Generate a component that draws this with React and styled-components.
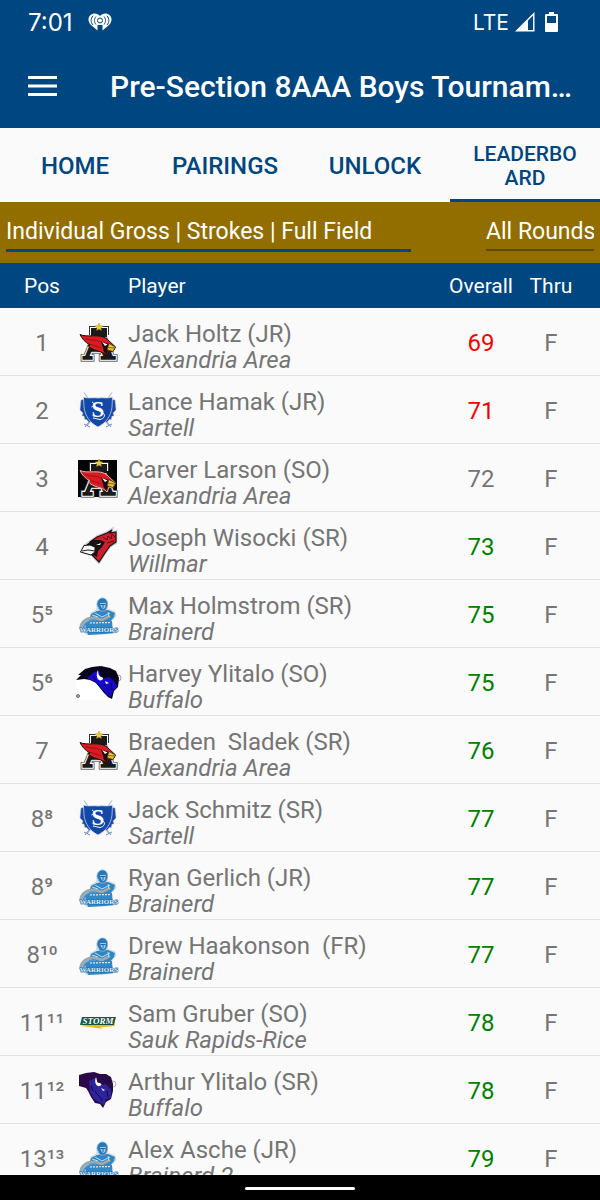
import React from 'react'
import styled, { createGlobalStyle } from 'styled-components'

const players = [
  { pos: '1', logo: 'alexandria', name: 'Jack Holtz (JR)', school: 'Alexandria Area', score: 69 },
  { pos: '2', logo: 'sartell', name: 'Lance Hamak (JR)', school: 'Sartell', score: 71 },
  { pos: '3', logo: 'alexandriaDark', name: 'Carver Larson (SO)', school: 'Alexandria Area', score: 72 },
  { pos: '4', logo: 'willmar', name: 'Joseph Wisocki (SR)', school: 'Willmar', score: 73 },
  { pos: '5⁵', logo: 'brainerd', name: 'Max Holmstrom (SR)', school: 'Brainerd', score: 75 },
  { pos: '5⁶', logo: 'buffalo', name: 'Harvey Ylitalo (SO)', school: 'Buffalo', score: 75 },
  { pos: '7', logo: 'alexandria', name: 'Braeden  Sladek (SR)', school: 'Alexandria Area', score: 76 },
  { pos: '8⁸', logo: 'sartell', name: 'Jack Schmitz (SR)', school: 'Sartell', score: 77 },
  { pos: '8⁹', logo: 'brainerd', name: 'Ryan Gerlich (JR)', school: 'Brainerd', score: 77 },
  { pos: '8¹⁰', logo: 'brainerd', name: 'Drew Haakonson  (FR)', school: 'Brainerd', score: 77 },
  { pos: '11¹¹', logo: 'storm', name: 'Sam Gruber (SO)', school: 'Sauk Rapids-Rice', score: 78 },
  { pos: '11¹²', logo: 'buffaloPurple', name: 'Arthur Ylitalo (SR)', school: 'Buffalo', score: 78 },
  { pos: '13¹³', logo: 'brainerd', name: 'Alex Asche (JR)', school: 'Brainerd 2', score: 79 },
]

const PAR = 72

function scoreColor(score) {
  if (score < PAR) return '#f80000'
  if (score > PAR) return '#008000'
  return '#757575'
}

function Cardinal({ dark }) {
  return (
    <>
      {dark && <rect width="39" height="37" y="1" fill="#050505" />}
      <BlockLetter x="21" y="36" stroke="#333" strokeWidth="5">A</BlockLetter>
      <rect x="11" y="3" width="20" height="9" fill="#333" />
      <BlockLetter x="21" y="36" stroke="#fff" strokeWidth="3.600">A</BlockLetter>
      <rect x="12" y="4" width="18" height="8" fill="#fff" />
      <BlockLetter x="21" y="36" stroke="#1a1a1a" strokeWidth="1.500">A</BlockLetter>
      <rect x="13" y="5" width="16" height="9" fill="#1a1a1a" />
      <path d="M2 11.500C9 15 22 10 29 16L37.500 24L35 28.500L31 28L29 33C24 27 15 29 10 22.500L12 22C7 19 4 16 2 11.500Z" fill="#d91c22" stroke={dark ? '#d8b8b0' : '#111'} strokeWidth="1" />
      <path d="M7 15.500C13 18 18 16 23 19M12 21C16 23 19 23 23 25" fill="none" stroke="#8c0d14" strokeWidth="0.800" />
      <path d="M23 18.500L31 21L30 26L29 32C27 30 25 28 25 25Z" fill="#1a0708" />
      <path d="M24 19L29.500 21.500L27 23Z" fill="#fff" />
      <path d="M31 20.500L37.500 24L35 28.500L29 26.500Z" fill="#f0c62b" stroke="#332a10" strokeWidth="0.700" />
      <path d="M30 24.500L36.500 25" stroke="#332a10" strokeWidth="0.600" />
      <path d="M21 0L22.200 2.600L25 3L23 5L23.500 7.500L21 6.200L18.500 7.500L19 5L17 3L19.800 2.600Z" fill="#f2cf2e" stroke="#8a7a1c" strokeWidth="0.400" />
    </>
  )
}

function Sartell() {
  return (
    <>
      <path d="M6 1.500L31 35M34 1.500L9 35" stroke="#9aa9d4" strokeWidth="1" />
      <path d="M6 33L12 36M7 36L11 31M28 36L34 33M29 31L33 36" stroke="#6f85c4" strokeWidth="1" />
      <path d="M3 9L8 8L8 18L14 31L11 31L8 28L7 29L6 25L4 25L5 22L2 19ZM37 9L32 8L32 18L26 31L29 31L32 28L33 29L34 25L36 25L35 22L38 19Z" fill="#1c469c" stroke="#a9b9de" strokeWidth="0.500" />
      <path d="M5.500 6C11 8 15 6 20 7C25 6 29 8 34.500 6L34 16C33 25 28 32 20 36C12 32 7 25 6 16Z" fill="#1249a8" stroke="#dbe3f5" strokeWidth="0.700" />
      <ShieldLetter x="20" y="26">S</ShieldLetter>
      <path d="M14 11C17 12 16 15 13.500 16M25 22C28 24 26 28 22 28.500L15 27" fill="none" stroke="#fff" strokeWidth="1" />
    </>
  )
}

function Willmar() {
  return (
    <>
      <path d="M3 25L6 18.500L12 14L19 9L29 5L35 1L34 5L38.500 4L38.500 16L32 20L27 27L21 36.500L14 28.500Z" fill="#c9cdd0" stroke="#c9cdd0" strokeWidth="1.500" />
      <path d="M12 15L19 10L29 6L34 3L32 6L38 5L38 15L32 19L27 26L21 35L14 28Z" fill="#cf1d2b" stroke="#151515" strokeWidth="1.200" />
      <path d="M8 18L15 13L22 13L27 15L24 20L20 24L19 30L13 27Z" fill="#141414" />
      <path d="M2.500 25L6 18.500L12 18L17 20L17 25L13 28Z" fill="#f4f4f4" stroke="#161616" strokeWidth="1" />
      <path d="M4 24L10 23L17 24" fill="none" stroke="#222" strokeWidth="1" />
      <path d="M18 18L23 16L22 18Z" fill="#fff" />
      <path d="M25 10L29 13L30 9L33 12L34 7L37 10M29 16L36 14" fill="none" stroke="#5c0b12" strokeWidth="1" />
    </>
  )
}

function Warrior() {
  return (
    <>
      <path d="M12 18L18 15L19 6L24 2.500L29.500 6L30 14L37 16L38.500 21L33 27L35 39L9 40L3 36L2 30L7 24L13 21Z" fill="#d2dbe1" />
      <path d="M13 19L19 16L30 15L37 18L36 22L31 28L10 28Z" fill="#2e86c6" />
      <path d="M19 10C19 5 22 3 24.500 3C28 3 30 6 29.500 11L27 16L22 16Z" fill="#2479bb" stroke="#8fb4cd" strokeWidth="0.800" />
      <path d="M22 8L28 8L27 13L25 14L23 12Z" fill="#a7cbe2" />
      <path d="M22.500 9.500L27.500 9.500M25 9L25 13" stroke="#1767a3" strokeWidth="1" />
      <path d="M4 37C0 29 8 22 17 23L24 25L32 21" fill="none" stroke="#9ba9b1" strokeWidth="3" />
      <path d="M6 36C4 29 10 25 18 25.500" fill="none" stroke="#4b9bd1" strokeWidth="2" />
      <path d="M17 18L24 22L32 18M14 20L20 22M30 17L31 22" fill="none" stroke="#c7dce9" strokeWidth="1" />
      <path d="M7 29L13 26L34 26L35 38L27 39L10 40Z" fill="#3389c6" />
      <path d="M12 28L32 27.500" stroke="#e0edf5" strokeWidth="1.200" strokeDasharray="2 1" />
      <TeamWord x="21" y="37" fontSize="7" $narrow $fill="#e2eff8" $stroke="#1c6daa">WARRIORS</TeamWord>
    </>
  )
}

function Bison({ purple }) {
  if (purple) {
    return (
      <>
        <circle cx="35" cy="13" r="3" fill="none" stroke="#b6a9bd" strokeWidth="1" />
        <path d="M1 4L8 2L16 1L22 3L28 3L33 6L35 13L35 20L33 28L28 31L25 37L22 33L17 32L13 26L10 20L8 17L1 15Z" fill="#2b0a48" />
        <path d="M11 10L17 7L20 15L28 13L33 19L33 27L28 28L26 34L21 31L16 28L12 21Z" fill="#2d249d" />
        <path d="M18 6C16 11 18 16 22 15C25 14 23 12 21 12C19 12 19 9 18 6Z" fill="#fff" />
        <path d="M23 17L27 19L25 20Z" fill="#eee" />
        <path d="M17 20C19 24 23 26 24 30M29 20L30 26M13 15L15 20M25 8L30 14M27 6L32 12" fill="none" stroke="#16043a" strokeWidth="1" />
      </>
    )
  }
  return (
    <>
      <path d="M-2 16L36 16L36 37L-2 37Z" fill="#fff" />
      <circle cx="40" cy="15" r="3" fill="none" stroke="#999" strokeWidth="1" />
      <path d="M-2 17L3 12L0 12L7 6L14 4L23 3L32 5L38 8L41 15L40 24L36 28L34 36L30 34L26 30L22 25L18 20L12 17L6 16Z" fill="#07051c" />
      <path d="M9 15L16 9L21 8L24 16L31 14L37 19L39 24L35 28L33 34L28 31L23 25L17 19Z" fill="#1707cc" />
      <path d="M20 7C17 13 20 19 24 17C26 16 25 14 23 14C21 13 20 11 20 7Z" fill="#fff" />
      <path d="M27 18L31 20L28 21Z" fill="#fff" />
      <path d="M15 13L18 17M26 21L30 27M33 20L34 27" stroke="#080238" strokeWidth="1" />
      <circle cx="0" cy="33" r="1.500" fill="#aaa" stroke="#555" strokeWidth="0.800" />
    </>
  )
}

function Storm() {
  return (
    <>
      <path d="M2 23L14 21L36 21L37 23L22 24.500L25 26L12 24Z" fill="#e9b927" />
      <path d="M4 14L38 14L36 22L2 22Z" fill="#17614a" />
      <TeamWord x="20" y="21" fontSize="9" $italic $fill="#fff" $stroke="#123f32">STORM</TeamWord>
    </>
  )
}

const logos = {
  alexandria: <Cardinal />,
  alexandriaDark: <Cardinal dark />,
  sartell: <Sartell />,
  willmar: <Willmar />,
  brainerd: <Warrior />,
  buffalo: <Bison />,
  buffaloPurple: <Bison purple />,
  storm: <Storm />,
}

function HeartRadioIcon() {
  return (
    <svg width="24" height="18" viewBox="0 0 24 18" aria-hidden="true">
      <path d="M12 3C10 0 5 -0.500 2.500 2C-0.500 5 0 9 3 12L9.500 17.500L9.500 12L14.500 12L14.500 17.500L21 12C24 9 24.500 5 21.500 2C19 -0.500 14 0 12 3Z" fill="#fff" />
      <g fill="none" stroke="#004680" strokeWidth="1">
        <circle cx="12" cy="7.500" r="2.500" />
        <path d="M8 3.500C6 6 6 9 8 11.500M5 2.800C2.500 6 2.500 9 5 12M16 3.500C18 6 18 9 16 11.500M19 2.800C21.500 6 21.500 9 19 12" />
      </g>
      <path d="M11 12L11 18L13 18L13 12Z" fill="#004680" />
    </svg>
  )
}

export default function App() {
  return (
    <Screen>
      <GlobalStyle />
      <StatusBar>
        <StatusGroup>
          <Clock>7:01</Clock>
          <HeartRadioIcon />
        </StatusGroup>
        <StatusGroup $right>
          <Network>LTE</Network>
          <svg width="20" height="20" viewBox="0 0 20 20" aria-hidden="true">
            <path fillRule="evenodd" d="M0 19.500L19.500 0V19.500ZM13 8.500V18H18V3.500Z" fill="#fff" />
          </svg>
          <svg width="17" height="20" viewBox="-4 0 17 20" aria-hidden="true">
            <path fillRule="evenodd" d="M4 0H9V2H12Q13 2 13 3V19Q13 20 12 20H1Q0 20 0 19V3Q0 2 1 2H4ZM2 4V11H11V4Z" fill="#fff" />
          </svg>
        </StatusGroup>
      </StatusBar>

      <TitleBar>
        <MenuButton aria-label="Menu">
          <svg width="29" height="20" viewBox="0 0 29 20" aria-hidden="true">
            <path d="M0 1.500H29M0 10H29M0 18.500H29" stroke="#fff" strokeWidth="3" />
          </svg>
        </MenuButton>
        <h1>Pre-Section 8AAA Boys Tournament</h1>
      </TitleBar>

      <Tabs>
        <Tab href="#home">HOME</Tab>
        <Tab href="#pairings">PAIRINGS</Tab>
        <Tab href="#unlock">UNLOCK</Tab>
        <Tab href="#leaderboard" $active>LEADERBOARD</Tab>
      </Tabs>

      <Filters>
        <FilterInput aria-label="Leaderboard" defaultValue="Individual Gross | Strokes | Full Field" $primary />
        <FilterInput aria-label="Rounds" defaultValue="All Rounds" />
      </Filters>

      <Board>
        <Table>
          <colgroup>
            <Col $width={76} />
            <Col $width={44} />
            <col />
            <Col $width={70} />
            <Col $width={84} />
          </colgroup>
          <thead>
            <tr>
              <PosHead>Pos</PosHead>
              <PlayerHead colSpan={2}>Player</PlayerHead>
              <Head>Overall</Head>
              <ThruHead>Thru</ThruHead>
            </tr>
          </thead>
          <tbody>
            {players.map((p) => (
              <Row key={p.name}>
                <PosCell>{p.pos}</PosCell>
                <Cell>
                  <Logo viewBox="0 0 40 40" aria-hidden="true">{logos[p.logo]}</Logo>
                </Cell>
                <PlayerCell>
                  <Name>{p.name}</Name>
                  <School>{p.school}</School>
                </PlayerCell>
                <ScoreCell $color={scoreColor(p.score)}>{p.score}</ScoreCell>
                <ThruCell>F</ThruCell>
              </Row>
            ))}
          </tbody>
        </Table>
      </Board>

      <NavBar>
        <Handle />
      </NavBar>
    </Screen>
  )
}


const GlobalStyle = createGlobalStyle`
  * {
    box-sizing: border-box;
  }

  body {
    margin: 0;
    font-family: Roboto, 'Liberation Sans', sans-serif;
    background: #fafafa;
  }
`;

const Screen = styled.div`
  display: flex;
  flex-direction: column;
  height: 100vh;
  overflow: hidden;
`;

const StatusBar = styled.div`
  flex: none;
  display: flex;
  justify-content: space-between;
  align-items: center;
  height: 44px;
  padding: 0 42px 0 28px;
  background: #004680;
  color: #fff;
  font-family: Inter, Roboto, sans-serif;
`;

const StatusGroup = styled.div`
  display: flex;
  align-items: center;
  gap: ${(props) => (props.$right ? '6px' : '15px')};
`;

const Clock = styled.span`
  font-size: 24px;
`;

const Network = styled.span`
  font-size: 21px;
`;

const TitleBar = styled.header`
  flex: none;
  display: flex;
  align-items: center;
  gap: 53px;
  height: 84px;
  padding: 0 18px 0 28px;
  background: #004680;
  color: #fff;

  h1 {
    flex: 1;
    min-width: 0;
    margin: 0;
    font-size: 30px;
    font-weight: 500;
    white-space: nowrap;
    overflow: hidden;
    text-overflow: ellipsis;
  }
`;

const MenuButton = styled.button`
  display: flex;
  border: 0;
  padding: 0;
  background: none;
  cursor: pointer;
`;

const Tabs = styled.nav`
  flex: none;
  display: grid;
  grid-template-columns: repeat(4, 1fr);
  height: 74px;
  background: #fafafa;
`;

const Tab = styled.a`
  display: flex;
  align-items: center;
  justify-content: center;
  padding: 5px 20px 0;
  border-bottom: 3px solid ${(props) => (props.$active ? '#004680' : 'transparent')};
  color: #004680;
  font-size: ${(props) => (props.$active ? '21px' : '24px')};
  font-weight: 500;
  line-height: 24px;
  text-align: center;
  text-decoration: none;
  word-break: break-all;
`;

const Filters = styled.div`
  flex: none;
  display: flex;
  justify-content: space-between;
  align-items: flex-start;
  height: 61px;
  padding: 12px 6px 0;
  background: #926e00;
`;

const FilterInput = styled.input`
  width: ${(props) => (props.$primary ? '405px' : '108px')};
  height: ${(props) => (props.$primary ? '38px' : '37px')};
  border: 0;
  border-bottom: ${(props) => (props.$primary ? '3px solid #004680' : '2px solid #634700')};
  padding: 0;
  background: none;
  color: #fff;
  font-family: inherit;
  font-size: 23px;
  outline: none;
`;

const Board = styled.main`
  flex: 1;
  min-height: 0;
  overflow: hidden;
  background: #fafafa;
`;

const Table = styled.table`
  width: 100%;
  table-layout: fixed;
  border-collapse: separate;
  border-spacing: 0;
`;

const Col = styled.col`
  width: ${(props) => props.$width}px;
`;

const Head = styled.th`
  height: 45px;
  padding: 0;
  background: #004680;
  color: #fff;
  font-size: 21px;
  font-weight: 400;
  text-align: center;
`;

const PosHead = styled(Head)`
  padding-left: 8px;
`;

const PlayerHead = styled(Head)`
  padding-left: 52px;
  text-align: left;
`;

const ThruHead = styled(Head)`
  padding-right: 14px;
`;

const Row = styled.tr`
  height: 68px;
`;

const Cell = styled.td`
  padding: 2px 0 0;
  border-bottom: 1px solid #e2e2e2;
  color: #757575;
  font-size: 24px;
  text-align: center;
  vertical-align: middle;
`;

const PosCell = styled(Cell)`
  padding: 2px 0 0 8px;
`;

const PlayerCell = styled(Cell)`
  padding: 11px 0 0 8px;
  text-align: left;
`;

const ScoreCell = styled(Cell)`
  color: ${(props) => props.$color};
`;

const ThruCell = styled(Cell)`
  padding: 2px 14px 0 0;
`;

const Name = styled.div`
  line-height: 26px;
  white-space: pre;
`;

const School = styled.div`
  font-style: italic;
  line-height: 26px;
`;

const Logo = styled.svg`
  display: block;
  width: 40px;
  height: 40px;
  margin: 0 auto;
  overflow: visible;
`;

const BlockLetter = styled.text`
  fill: #1a1a1a;
  font-family: 'DejaVu Serif', serif;
  font-size: 40px;
  font-weight: 700;
  text-anchor: middle;
`;

const ShieldLetter = styled.text`
  fill: #fff;
  font-family: 'Liberation Serif', serif;
  font-size: 23px;
  font-weight: 700;
  text-anchor: middle;
`;

const TeamWord = styled.text`
  fill: ${(props) => props.$fill};
  stroke: ${(props) => props.$stroke};
  stroke-width: 1px;
  paint-order: stroke;
  font-family: ${(props) => (props.$narrow ? "'Liberation Sans Narrow', 'Liberation Serif', serif" : "'Liberation Serif', serif")};
  font-style: ${(props) => (props.$italic ? 'italic' : 'normal')};
  font-weight: 700;
  text-anchor: middle;
`;

const NavBar = styled.footer`
  flex: none;
  display: flex;
  align-items: center;
  justify-content: center;
  height: 25px;
  padding-top: 2px;
  background: #000;
`;

const Handle = styled.div`
  width: 110px;
  height: 3px;
  border-radius: 2px;
  background: #fff;
`;
